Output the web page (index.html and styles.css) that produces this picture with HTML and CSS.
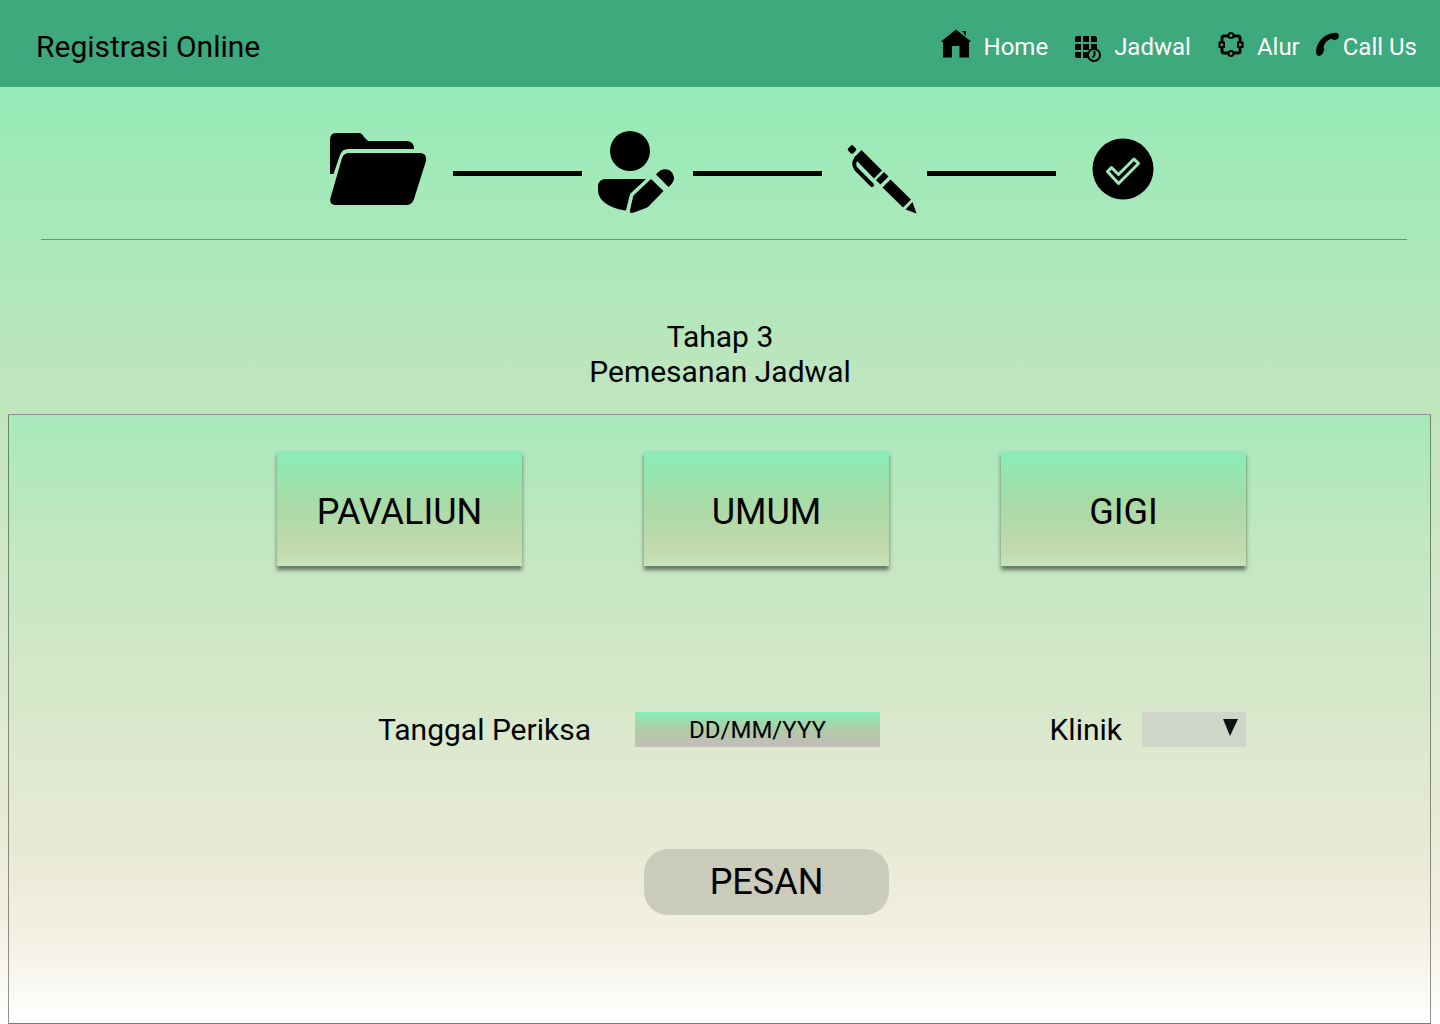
FILE: index.html
```html
<!DOCTYPE html>
<html lang="id">
<head>
<meta charset="utf-8">
<meta name="viewport" content="width=device-width, initial-scale=1">
<title>Registrasi Online</title>
<link rel="stylesheet" href="styles.css">
</head>
<body>
<header class="topbar">
  <h1 class="brand">Registrasi Online</h1>
  <nav class="nav">
    <a class="nav-link" href="#home">
      <svg width="30" height="36" viewBox="0 0 30 36" aria-hidden="true"><path d="M15 .5L29.500 12v1H28v15.500h-9.500V17H11v11.500H2V13H.5v-1zM21 2h4v5z"/></svg>
      Home
    </a>
    <a class="nav-link" href="#jadwal">
      <svg width="26" height="36" viewBox="0 0 26 36" aria-hidden="true">
        <path d="M1.500 7H6v6H0V8.500zM8 7h6v6H8zM16 7h4.500L22 8.500V13h-6zM0 15h6v6H0zM8 15h6v6H8zM16 15h6v6h-6zM0 23h6v6H1.500L0 27.500zM8 23h6v6H8z"/>
        <circle class="clock" cx="19" cy="26" r="6"/>
        <path class="stroke" d="M19.500 22v4l-2 2.500"/>
      </svg>
      Jadwal
    </a>
    <a class="nav-link" href="#alur">
      <svg width="26" height="36" viewBox="0 0 26 36" aria-hidden="true">
        <path class="flow" d="M6 7h14q2 0 2 2v13q0 2-2 2H6q-2 0-2-2V9q0-2 2-2z"/>
        <circle class="node" cx="13" cy="6.500" r="2.500"/><circle class="node" cx="13" cy="24.500" r="2.500"/>
        <path class="node" d="M1.500 13.500h4.500v4.500H1.500zM20 13.500h4.500v4.500H20z"/>
      </svg>
      Alur
    </a>
    <a class="nav-link nav-call" href="#call">
      <svg width="23" height="36" viewBox="0 0 23 36" aria-hidden="true"><path d="M15 4.500c3-1 6-1 7.500.5l.3 3c-.8 2.500-3.500 3.500-6.300 2.500l-1-1C11 11 8.500 14 7.500 18l.7 2c0 3-2.200 6-4.700 7C1 27 0 25 0 22 1 13 7 6.500 15 4.500z"/></svg>
      Call Us
    </a>
  </nav>
</header>

<main class="page">
  <div class="steps">
    <svg class="step" viewBox="0 0 123 93" role="img" aria-label="Data"><path d="M0 13Q0 6 6 6H29Q32 6 34 10L38 14H78Q84 15 84 22H18Q12 22 10 28L3.500 47H0zM19 26H90Q97 26 96 34L84 72Q82 78 76 78H5Q-1 77 0.500 71L12 31Q14 26 19 26z"/></svg>
    <span class="step-line"></span>
    <svg class="step" viewBox="0 0 111 93" role="img" aria-label="Profil"><circle cx="48" cy="24" r="20"/><path d="M24 52H64L49 66Q48 67 47.500 69L44 83.500C32 82 16 76 16 63V60Q16 52 24 52zM69 52L81.500 64 67 79Q66 80 64 81L52 85.500Q47 87 48 83L51 70Q51 69 52 68zM74 47.500C80 39 91 41 92 51 92 55 89 58 86.500 60z"/></svg>
    <span class="step-line"></span>
    <svg class="step" viewBox="0 0 105 93" role="img" aria-label="Jadwal"><path d="M29 18.500Q30 17.500 31 18.500L34 21.500Q34.500 22.500 34 23.500L31 26.500Q30 27 29 26.500L26 23.500Q25.500 22.500 26 21.500zM39.500 23L60 43.500 52 51.500 36 35 32 30.500zM62 45L66.500 49.500 58.500 57.500 54 53zM68.500 52.500L89 72.500 81 80.500 60.500 60.500zM90.500 75L94.500 86.500 83.500 82.500z"/><path class="clip" d="M35 31Q30 36 34 42L50 58"/></svg>
    <span class="step-line"></span>
    <svg class="step" viewBox="0 0 98 93" role="img" aria-label="Selesai"><circle cx="67" cy="42" r="30.500"/><path class="tick" d="M51.500 44.500L55.500 40.500 62.500 47.500 78 32 82.500 36.500 62.500 56.500z"/></svg>
  </div>
  <hr class="rule">

  <h2 class="title">Tahap 3<br>Pemesanan Jadwal</h2>

  <form class="panel">
    <div class="panel-grid">
      <button class="card" type="button">PAVALIUN</button>
      <button class="card" type="button">UMUM</button>
      <button class="card" type="button">GIGI</button>
    </div>
    <div class="fields">
      <div class="field field-date">
        <label for="tanggal">Tanggal Periksa</label>
        <input class="date" id="tanggal" type="text" placeholder="DD/MM/YYY">
      </div>
      <div class="field">
        <label for="klinik">Klinik</label>
        <div class="select-wrap">
          <select class="select" id="klinik"><option value=""></option></select>
          <svg class="arrow" width="15" height="17" viewBox="0 0 15 17" aria-hidden="true"><path d="M0 0h15L7 17z"/></svg>
        </div>
      </div>
    </div>
    <div class="panel-grid">
      <button class="submit" type="submit">PESAN</button>
    </div>
  </form>
</main>
</body>
</html>
```
FILE: styles.css
```css
* {
  box-sizing: border-box;
}

body {
  margin: 0;
  min-height: 100vh;
  display: flex;
  flex-direction: column;
  font-family: Roboto, sans-serif;
  color: #000;
  background: linear-gradient(#8aecb5 0%, #c3e5be 41%, #ebebd8 82%, #f3f0e3 90%, #fff 100%);
}

button,
input,
select {
  font-family: inherit;
  color: inherit;
  border: 0;
  padding: 0;
}

.topbar {
  min-height: 87px;
  padding: 6px 23px 0 36px;
  display: flex;
  align-items: center;
  justify-content: space-between;
  background: #3da97c;
}

.brand {
  margin: 0;
  font-size: 30px;
  font-weight: 400;
}

.nav {
  display: flex;
}

.nav-link {
  display: flex;
  align-items: center;
  gap: 13px;
  font-size: 24px;
  color: #fff;
  text-decoration: none;
}

.nav-link + .nav-link {
  margin-left: 27px;
}

.nav-link + .nav-call {
  margin-left: 16px;
  gap: 4px;
}

.nav-link svg {
  fill: #000;
}

.nav-link .clock {
  fill: #3da97c;
  stroke: #000;
  stroke-width: 2;
}

.nav-link .stroke,
.nav-link .flow {
  fill: none;
  stroke: #000;
  stroke-width: 2;
}

.nav-link .flow {
  stroke-width: 3;
}

.nav-link .node {
  fill: #3da97c;
  stroke: #000;
  stroke-width: 2;
}

.page {
  flex: 1;
  display: flex;
  flex-direction: column;
}

.steps {
  padding: 40px 0 19px 44px;
  display: grid;
  grid-template-columns: 123px 129px 111px 129px 105px 129px 98px;
  justify-content: center;
  align-items: center;
}

.step {
  width: 100%;
  height: 93px;
}

.step-line {
  height: 5px;
  background: #000;
}

.clip {
  fill: none;
  stroke: #000;
  stroke-width: 4;
  stroke-linecap: round;
}

.tick {
  fill: none;
  stroke: #9de9b7;
  stroke-width: 3;
  stroke-linejoin: round;
}

.rule {
  margin: 0 33px 0 41px;
  border: 0;
  border-top: 1px solid #4da67c;
}

.title {
  margin: 0;
  padding: 79px 0 25px;
  font-size: 30px;
  line-height: 35px;
  font-weight: 400;
  text-align: center;
}

.panel {
  flex: 1;
  margin: 0 9px 0 8px;
  padding: 36px 0 108px 84px;
  display: flex;
  flex-direction: column;
  align-items: center;
  border: 1px solid rgba(0, 0, 0, 0.42);
  background: linear-gradient(#a8e9bb 0%, #c6e7c2 25%, #dce8cd 54%, #ebebd8 75%, #f4f1e5 87%, #fff 100%);
}

.panel-grid {
  display: grid;
  grid-template-columns: 367px 357px 245px;
}

.card {
  width: 245px;
  height: 115px;
  padding-top: 6px;
  font-size: 36px;
  background: linear-gradient(#89edb7 0%, #a8dba6 45%, #c3d9ae 85%, #c5e4bd 100%);
  box-shadow: 0 4px 4px rgba(0, 0, 0, 0.5);
}

.fields {
  width: 969px;
  margin: 146px 0 102px;
  padding-left: 101px;
  display: flex;
  justify-content: space-between;
  font-size: 30px;
  line-height: 35px;
}

.field {
  display: flex;
  gap: 20px;
}

.field-date {
  gap: 44px;
}

.date {
  width: 245px;
  height: 35px;
  font-size: 24px;
  text-align: center;
  background: linear-gradient(#89edb7, #b3c9a5 55%, #c4bcbc);
}

.date::placeholder {
  color: #000;
  opacity: 1;
}

.select-wrap {
  position: relative;
  width: 104px;
  height: 35px;
}

.select {
  display: block;
  width: 100%;
  height: 100%;
  appearance: none;
  border-radius: 0;
  background: #cfd5c9;
}

.arrow {
  position: absolute;
  top: 7px;
  right: 8px;
  fill: #111;
  pointer-events: none;
}

.submit {
  grid-column: 2;
  width: 245px;
  height: 66px;
  border-radius: 24px;
  font-size: 36px;
  background: #cacbba;
}
```
